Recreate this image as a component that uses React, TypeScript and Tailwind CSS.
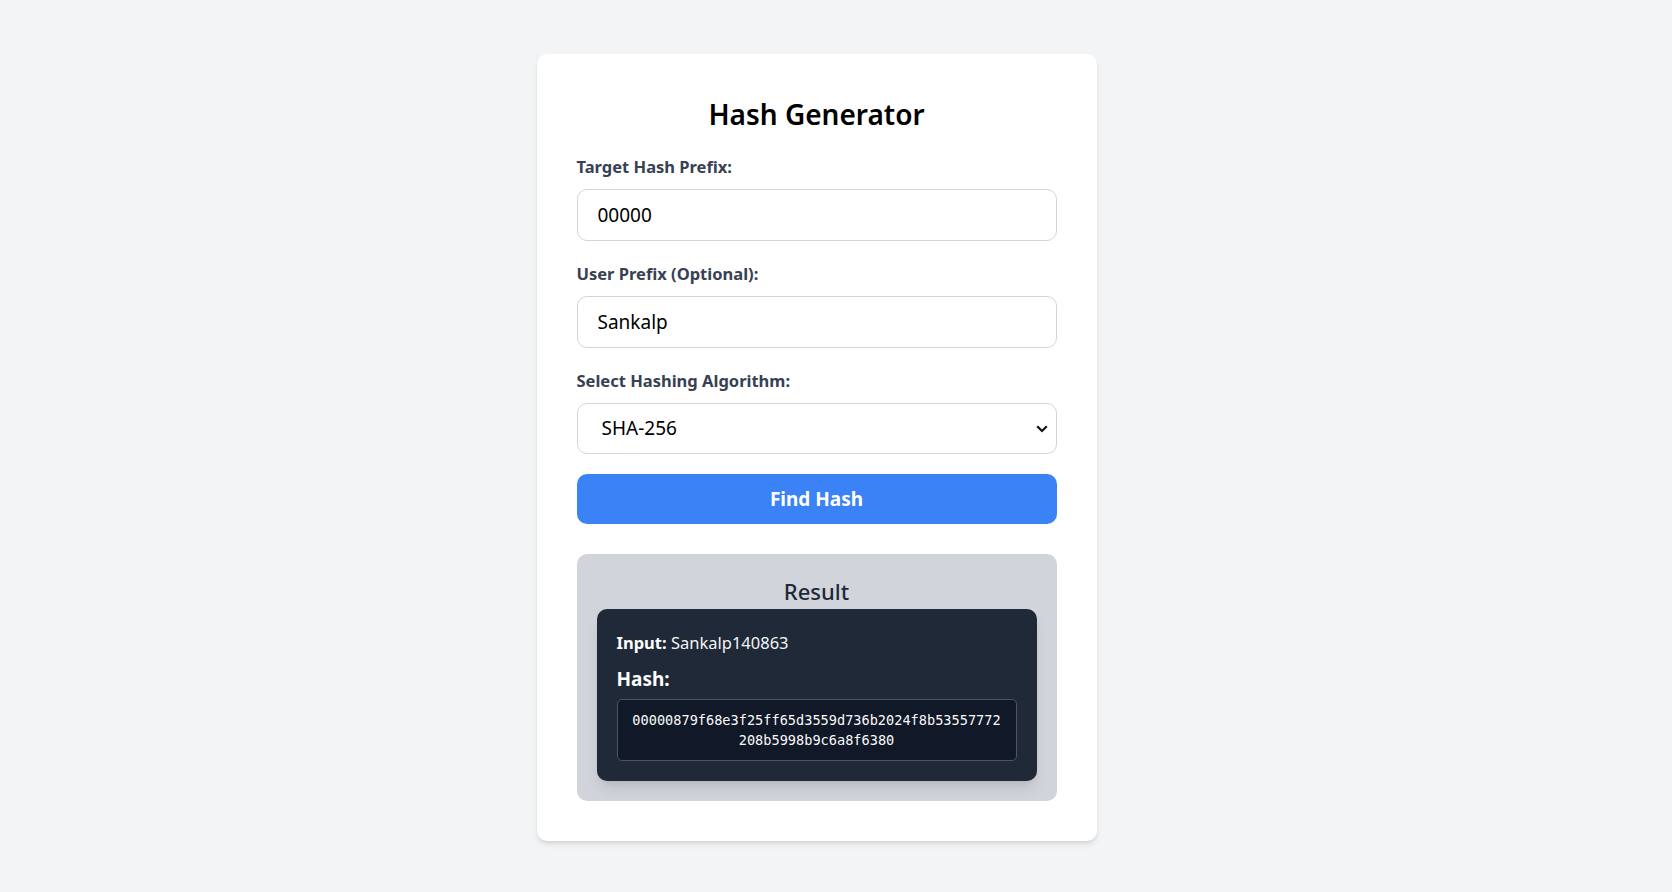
import { useState } from "react";

const HASH = "00000879f68e3f25ff65d3559d736b2024f8b53557772208b5998b9c6a8f6380";

const App: React.FC = () => {
    const [target, setTarget] = useState("00000");
    const [prefix, setPrefix] = useState("Sankalp");
    const [algo, setAlgo] = useState("SHA-256");

    return (
        <div className="min-h-screen bg-[#f3f4f6] flex justify-center items-start pt-[54px] pr-[39px] font-['Noto_Sans',sans-serif]">
            <div className="w-[560px] bg-white rounded-[10px] shadow-md p-10">
                <h1 className="mt-[2px] mb-[22px] text-center text-[28px] leading-[36px] font-semibold text-black">
                    Hash Generator
                </h1>

                <div className="mb-5">
                    <label className="block mb-[10px] text-[16.5px] leading-[25px] font-bold text-[#374151]">
                        Target Hash Prefix:
                    </label>
                    <input
                        value={target}
                        onChange={(e) => setTarget(e.target.value)}
                        className="w-full h-[52px] px-5 border border-[#d1d5db] rounded-[10px] text-[19px] text-black outline-none"
                    />
                </div>

                <div className="mb-5">
                    <label className="block mb-[10px] text-[16.5px] leading-[25px] font-bold text-[#374151]">
                        User Prefix (Optional):
                    </label>
                    <input
                        value={prefix}
                        onChange={(e) => setPrefix(e.target.value)}
                        className="w-full h-[52px] px-5 border border-[#d1d5db] rounded-[10px] text-[19px] text-black outline-none"
                    />
                </div>

                <div className="mb-5">
                    <label className="block mb-[10px] text-[16.5px] leading-[25px] font-bold text-[#374151]">
                        Select Hashing Algorithm:
                    </label>
                    <div className="relative">
                        <select
                            value={algo}
                            onChange={(e) => setAlgo(e.target.value)}
                            className="w-full h-[51px] pl-[24px] pr-10 appearance-none bg-white border border-[#d1d5db] rounded-[10px] text-[19px] text-black outline-none">
                            <option>SHA-256</option>
                            <option>SHA-1</option>
                            <option>SHA-512</option>
                            <option>MD5</option>
                        </select>
                        <svg
                            className="absolute right-[8px] top-1/2 -translate-y-1/2 pointer-events-none"
                            width="14"
                            height="14"
                            viewBox="0 0 14 14"
                            fill="none">
                            <polyline
                                points="3,5 7,9 11,5"
                                stroke="#111"
                                strokeWidth="2.2"
                                strokeLinecap="square"
                            />
                        </svg>
                    </div>
                </div>

                <button className="w-full h-[50px] bg-[#3b82f6] text-white text-[19px] font-bold rounded-[10px]">
                    Find Hash
                </button>

                <div className="mt-[30px] bg-[#d1d5db] rounded-[10px] p-5">
                    <h2 className="text-center text-[22px] leading-[35px] font-medium text-[#1f2937]">
                        Result
                    </h2>
                    <div className="bg-[#1f2937] rounded-[10px] p-5 shadow-lg text-[#f3f4f6]">
                        <p className="mb-2 text-[16.5px] leading-[28px]">
                            <span className="font-bold text-white">Input:</span> Sankalp140863
                        </p>
                        <h3 className="mb-[6px] text-[19px] leading-[28px] font-bold text-white">
                            Hash:
                        </h3>
                        <div className="bg-[#111827] border border-[#4b5563] rounded-[5px] px-3 py-[10px] text-center break-all text-[13.6px] leading-[20px] text-[#f9fafb] font-['DejaVu_Sans_Mono',monospace]">
                            {HASH}
                        </div>
                    </div>
                </div>
            </div>
        </div>
    );
};

export default App;
